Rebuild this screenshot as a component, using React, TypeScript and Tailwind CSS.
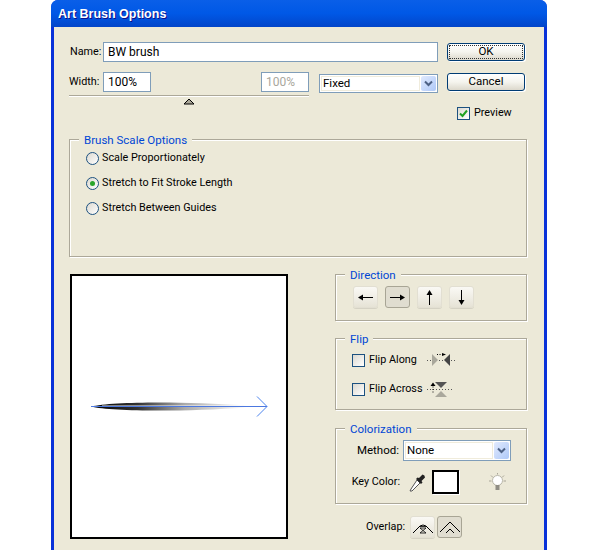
import type { ReactNode } from "react";

const FONT = "font-['Roboto',Arial,sans-serif] text-[10.8px] text-black";

function Group({ title, className, children }: { title: string; className: string; children: ReactNode }) {
  return (
    <div className={`relative border border-[#aca899] shadow-[1px_1px_0_#fff,inset_1px_1px_0_#fff] ${className}`}>
      <span className="absolute left-[9px] top-[-7px] bg-[#ece9d8] px-[5px] text-[11.5px] leading-[14px] text-[#0046d5]">
        {title}
      </span>
      {children}
    </div>
  );
}

function TextBox({ className, children }: { className: string; children: ReactNode }) {
  return (
    <div className={`flex h-[20px] items-center border border-[#7f9db9] bg-white pl-[4px] text-[12px] ${className}`}>
      {children}
    </div>
  );
}

function Select({ className, value }: { className: string; value: string }) {
  return (
    <div className={`flex items-center border border-[#7f9db9] bg-white p-[1px] ${className}`}>
      <div className="flex h-full flex-1 items-center border border-[#f0ecdc] pl-[1px] text-[11.5px]">{value}</div>
      <div className="ml-[1px] flex h-full w-[15px] items-center justify-center rounded-[2px] bg-gradient-to-br from-[#e1eafe] to-[#aec8f7]">
        <svg width="9" height="7" viewBox="0 0 9 7">
          <path d="M1 1.5 L4.5 5 L8 1.5" fill="none" stroke="#4d6185" strokeWidth="2" />
        </svg>
      </div>
    </div>
  );
}

function XpButton({ children, focused }: { children: ReactNode; focused?: boolean }) {
  return (
    <div className="flex h-[18px] w-[78px] items-center justify-center rounded-[3px] border border-[#003c74] bg-gradient-to-b from-white via-[#f5f4ee] to-[#dcd8cc] p-[1px] text-[11.5px] shadow-[1px_1px_0_#fff]">
      <div className={`flex h-full w-full items-center justify-center ${focused ? "border border-dotted border-[#333]" : ""}`}>
        {children}
      </div>
    </div>
  );
}

function Radio({ label, checked }: { label: string; checked?: boolean }) {
  return (
    <div className="flex h-[13px] items-center gap-[3px]">
      <div className="flex h-[13px] w-[13px] items-center justify-center rounded-full border border-[#1c5180] bg-gradient-to-br from-[#dcd9d0] to-white">
        {checked && <div className="h-[5px] w-[5px] rounded-full bg-[#2aa52a]" />}
      </div>
      <span>{label}</span>
    </div>
  );
}

function Check({ checked }: { checked?: boolean }) {
  return (
    <div className="flex h-[13px] w-[13px] shrink-0 items-center justify-center border border-[#1c5180] bg-gradient-to-br from-[#dcd9d0] to-white">
      {checked && (
        <svg width="9" height="9" viewBox="0 0 9 9">
          <path d="M1 4.5 L3.5 7 L8 1.5" fill="none" stroke="#21a121" strokeWidth="2" />
        </svg>
      )}
    </div>
  );
}

function IconButton({ pressed, w = 25, children }: { pressed?: boolean; w?: number; children: ReactNode }) {
  return (
    <div
      className={`flex h-[22px] items-center justify-center rounded-[3px] ${
        pressed
          ? "border border-[#a8a595] bg-[#e0ddd0]"
          : "border border-[#e2dfd2] bg-gradient-to-b from-[#faf9f5] to-[#e6e3d6] shadow-[0_1px_0_#d5d2c4]"
      }`}
      style={{ width: w }}
    >
      {children}
    </div>
  );
}

function Arrow({ rotate }: { rotate: number }) {
  return (
    <svg width="17" height="17" viewBox="0 0 17 17" style={{ transform: `rotate(${rotate}deg)` }}>
      <path d="M1 8.5 H13" stroke="#000" strokeWidth="1" />
      <path d="M16 8.5 L11 5.5 V11.5 Z" fill="#000" />
    </svg>
  );
}

function BrushPreview() {
  return (
    <svg width="214" height="25" viewBox="0 0 214 25">
      <defs>
        <linearGradient id="stroke" x1="0" x2="1" y1="0" y2="0">
          <stop offset="0" stopColor="#000" />
          <stop offset="0.3" stopColor="#333" />
          <stop offset="0.6" stopColor="#aaa" />
          <stop offset="1" stopColor="#fff" />
        </linearGradient>
      </defs>
      <path d="M19 12.5 C40 7.5 110 7 175 11.5 L175 13.5 C110 18 40 17.5 19 12.5 Z" fill="url(#stroke)" />
      <path d="M30 11.5 H170" stroke="#fff" strokeOpacity="0.45" strokeWidth="1" fill="none" />
      <path d="M19 12.5 H195" stroke="#4c78e0" strokeWidth="1" fill="none" />
      <path d="M185 2.5 L195 12.5 L185 22.5" stroke="#4c84ee" strokeWidth="1" fill="none" />
    </svg>
  );
}

export default function App() {
  return (
    <div className={`h-[550px] w-[600px] overflow-hidden bg-white ${FONT}`}>
      <div className="ml-[51px] flex h-[550px] w-[496px] flex-col rounded-t-[7px] bg-[#0831d9] px-[3px]">
        <div className="mx-[-3px] flex h-[27px] items-center rounded-t-[7px] bg-gradient-to-b from-[#0a5fe8] via-[#0058e6] to-[#0245c9] pl-[7px] pt-[2px] font-['Liberation_Sans',Arial,sans-serif] text-[12.5px] font-bold text-white [text-shadow:1px_1px_0_#0f1089]">
          Art Brush Options
        </div>
        <div className="flex-1 bg-[#ece9d8] pl-[15px] pr-[16px] pt-[15px]">
          {/* top rows */}
          <div className="flex h-[97px] gap-[9px]">
            <div className="w-[369px]">
              <div className="flex items-center">
                <span className="w-[34px] pl-[1px]">Name:</span>
                <TextBox className="w-[335px]">BW brush</TextBox>
              </div>
              <div className="mt-[10px] flex items-start">
                <span className="w-[34px] leading-[20px]">Width:</span>
                <TextBox className="w-[48px]">100%</TextBox>
                <TextBox className="ml-[110px] w-[48px] text-[#a9a79d]">100%</TextBox>
                <Select className="ml-[10px] mt-[2px] h-[19px] w-[119px]" value="Fixed" />
              </div>
              <div className="mt-[2px] h-[2px] w-[240px] border-t border-[#aca899] bg-white" />
              <svg className="ml-[114px] mt-[1px] block" width="12" height="7" viewBox="0 0 12 7">
                <path d="M1 6 L6 1 L11 6 Z" fill="#aca899" stroke="#000" strokeWidth="1" />
              </svg>
            </div>
            <div className="w-[78px] pt-[1px]">
              <XpButton focused>OK</XpButton>
              <div className="mt-[12px]">
                <XpButton>Cancel</XpButton>
              </div>
              <div className="ml-[10px] mt-[14px] flex items-center gap-[4px]">
                <Check checked />
                <span>Preview</span>
              </div>
            </div>
          </div>

          <Group title="Brush Scale Options" className="h-[118px] w-[458px]">
            <div className="flex flex-col gap-[12px] pl-[16px] pt-[12px]">
              <Radio label="Scale Proportionately" />
              <Radio label="Stretch to Fit Stroke Length" checked />
              <Radio label="Stretch Between Guides" />
            </div>
          </Group>

          <div className="mt-[17px] flex">
            <div className="ml-[1px] flex h-[265px] w-[218px] items-center justify-center border-2 border-black bg-white">
              <BrushPreview />
            </div>

            <div className="ml-[47px] w-[192px]">
              <Group title="Direction" className="h-[47px] w-[192px]">
                <div className="flex gap-[7px] pl-[17px] pt-[11px]">
                  <IconButton><Arrow rotate={180} /></IconButton>
                  <IconButton pressed><Arrow rotate={0} /></IconButton>
                  <IconButton><Arrow rotate={-90} /></IconButton>
                  <IconButton><Arrow rotate={90} /></IconButton>
                </div>
              </Group>

              <Group title="Flip" className="mt-[17px] h-[72px] w-[192px]">
                <div className="flex items-center pl-[16px] pt-[13px]">
                  <Check />
                  <span className="ml-[4px] w-[58px]">Flip Along</span>
                  <svg width="28" height="14" viewBox="0 0 28 14">
                    <path d="M0 7.5 H28" stroke="#555" strokeDasharray="1 2" />
                    <path d="M5 1 L11 7 L5 13 Z" fill="#a9a79b" />
                    <path d="M23 1 L17 7 L23 13 Z" fill="#444" />
                    <path d="M10 1.5 H17" stroke="#000" strokeDasharray="1 1.5" />
                    <path d="M19 1.5 L15 0 V3 Z" fill="#000" />
                  </svg>
                </div>
                <div className="mt-[13px] flex items-center pl-[16px]">
                  <Check />
                  <span className="ml-[4px] w-[58px]">Flip Across</span>
                  <svg width="26" height="16" viewBox="0 0 26 16">
                    <path d="M0 8.5 H26" stroke="#555" strokeDasharray="1 2" />
                    <path d="M8 1 H20 L14 7 Z" fill="#555" />
                    <path d="M8 16 H20 L14 10 Z" fill="#aaa89c" />
                    <path d="M6 3 V13" stroke="#000" strokeDasharray="1 1.5" />
                    <path d="M6 1.5 L3.5 5 H8.5 Z" fill="#000" />
                  </svg>
                </div>
              </Group>

              <Group title="Colorization" className="mt-[18px] h-[76px] w-[192px]">
                <div className="flex items-center pt-[11px]">
                  <span className="w-[63px] text-right text-[11.5px]">Method:</span>
                  <Select className="ml-[4px] h-[21px] w-[108px]" value="None" />
                </div>
                <div className="mt-[9px] flex items-center">
                  <span className="w-[64px] text-right">Key Color:</span>
                  <svg className="ml-[9px]" width="17" height="19" viewBox="0 0 17 19">
                    <path d="M2 16 L1 18 L3 18 L11 10 L8 7 Z" fill="#fff" stroke="#555" />
                    <path d="M7 6 L12 11 L13.5 9.5 L12.5 8 L16 4.5 Q16 2 13.5 1.5 L10 5 L8.5 4.5 Z" fill="#222" />
                  </svg>
                  <div className="ml-[6px] h-[24px] w-[27px] border-2 border-black bg-white shadow-[1px_1px_0_#fff]" />
                  <svg className="ml-[30px]" width="17" height="18" viewBox="0 0 17 18">
                    <g stroke="#a8a598" strokeWidth="1">
                      <path d="M0 8 H2.5 M14.5 8 H17 M2 2.5 L4 4.5 M15 2.5 L13 4.5 M8.5 0 V1.5" />
                    </g>
                    <circle cx="8.5" cy="7.5" r="5" fill="#ffffff" stroke="#b9b7aa" />
                    <rect x="6.5" y="12" width="4" height="5" fill="#8f8d84" />
                  </svg>
                </div>
              </Group>

              <div className="mt-[12px] flex items-center">
                <span className="ml-[31px] w-[44px]">Overlap:</span>
                <IconButton>
                  <svg width="22" height="14" viewBox="0 0 22 14">
                    <path d="M1 13 L8 6 Q11 4 14 6 L21 13" fill="none" stroke="#000" />
                    <path d="M7 6.5 H15 M8 13 H14 L8 8 H14 L8 13" fill="none" stroke="#000" strokeWidth="0.8" />
                  </svg>
                </IconButton>
                <div className="w-[2px]" />
                <IconButton pressed>
                  <svg width="22" height="14" viewBox="0 0 22 14">
                    <path d="M1 12 L11 2 L21 12" fill="none" stroke="#000" />
                    <path d="M7 13 L11 9 L15 13" fill="none" stroke="#000" />
                  </svg>
                </IconButton>
              </div>
            </div>
          </div>
        </div>
      </div>
    </div>
  );
}
